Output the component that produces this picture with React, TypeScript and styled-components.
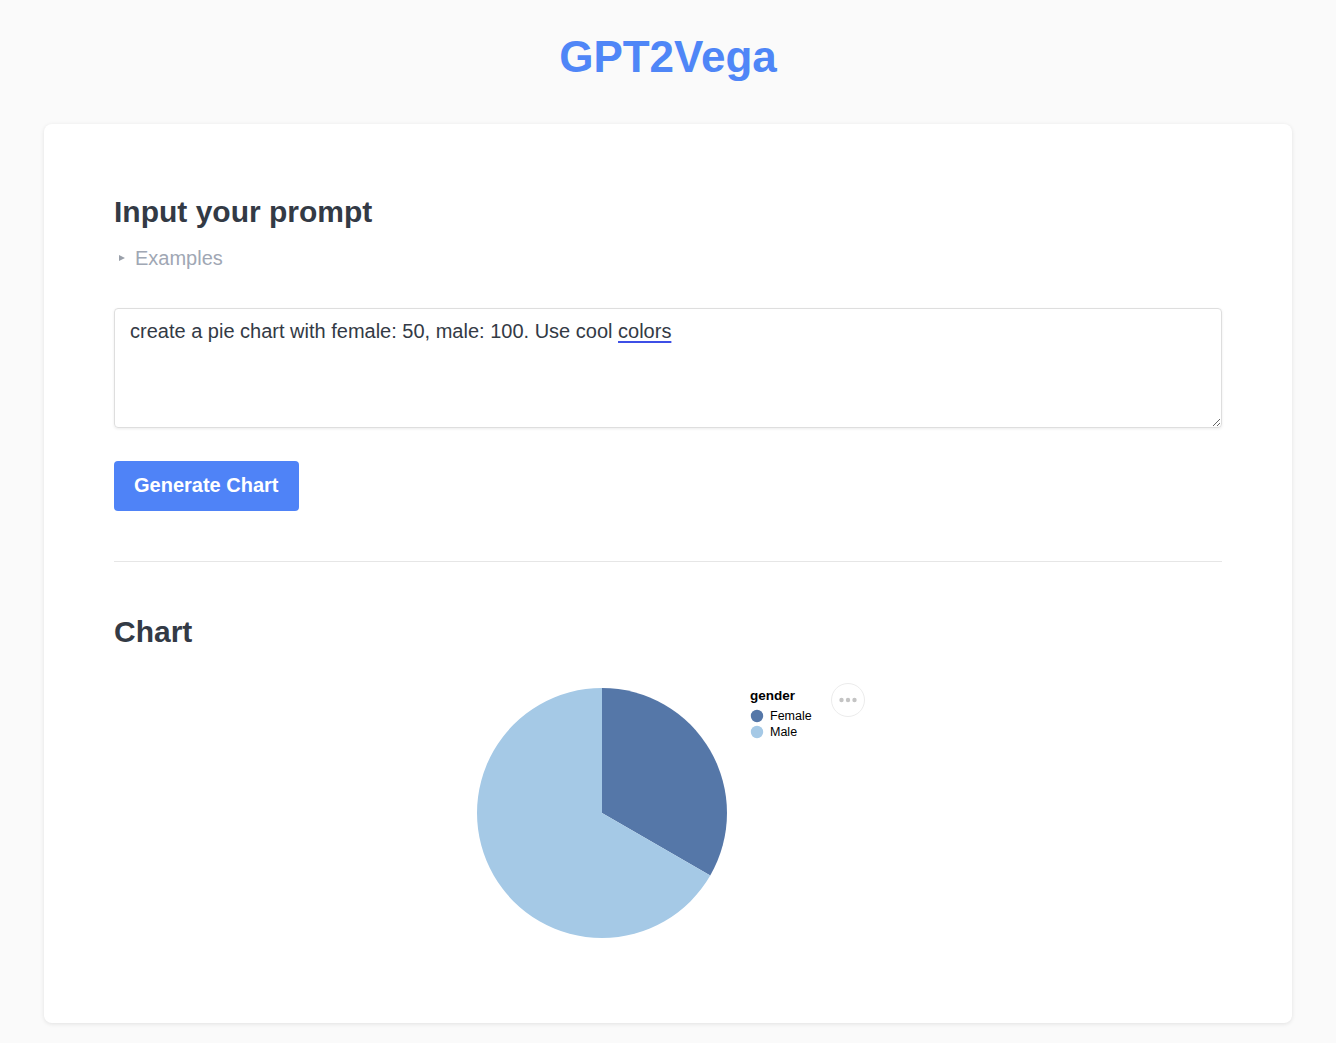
import React from "react";
import styled, { createGlobalStyle } from "styled-components";

const GlobalStyle = createGlobalStyle`
  html, body {
    margin: 0;
    padding: 0;
    background: #fafafa;
    font-family: "Liberation Sans", Arial, sans-serif;
  }
  * { box-sizing: border-box; }
`;

const Page = styled.div`
  padding: 32px 44px 20px;
`;

const Title = styled.h1`
  margin: 0 0 43px;
  text-align: center;
  font-size: 44px;
  font-weight: 700;
  line-height: 49px;
  color: #4f86f7;
`;

const Card = styled.main`
  background: #ffffff;
  border-radius: 8px;
  box-shadow: 0 1px 4px rgba(0, 0, 0, 0.1);
  padding: 71px 70px 80px;
`;

const Heading = styled.h2`
  margin: 0;
  font-size: 30px;
  line-height: 34.5px;
  font-weight: 700;
  color: #333a45;
`;

const Examples = styled.details`
  margin-top: 17px;
  font-size: 20px;
  line-height: 23px;
  color: #a0a7b4;
  summary {
    cursor: pointer;
    list-style: none;
    display: flex;
    align-items: center;
    gap: 10px;
  }
  summary::-webkit-details-marker { display: none; }
`;

const Marker = styled.span`
  display: inline-block;
  width: 0;
  height: 0;
  margin-left: 5px;
  border-top: 3.5px solid transparent;
  border-bottom: 3.5px solid transparent;
  border-left: 6px solid #9aa0aa;
`;

const FieldWrap = styled.div`
  position: relative;
  margin-top: 38px;
`;

const TextArea = styled.textarea`
  display: block;
  width: 100%;
  height: 120px;
  padding: 11px 15px;
  border: 1px solid #dedede;
  border-radius: 4px;
  box-shadow: 0 1px 3px rgba(0, 0, 0, 0.08);
  font-family: "Liberation Sans", Arial, sans-serif;
  font-size: 20px;
  line-height: 23px;
  color: #333a45;
  background: transparent;
  resize: vertical;
  outline: none;
`;

const Backdrop = styled.div`
  position: absolute;
  inset: 0;
  z-index: 1;
  padding: 12px 16px;
  font-size: 20px;
  line-height: 23px;
  color: transparent;
  pointer-events: none;
  white-space: pre-wrap;
`;

const Squiggle = styled.span`
  text-decoration-line: underline;
  text-decoration-style: solid;
  text-decoration-color: #3d4fe6;
  text-decoration-thickness: 1.5px;
  text-underline-offset: 3px;
`;

const Button = styled.button`
  display: block;
  margin-top: 33px;
  height: 50px;
  padding: 0 20px;
  border: none;
  border-radius: 4px;
  background: #4f83f7;
  color: #ffffff;
  font-family: "Liberation Sans", Arial, sans-serif;
  font-size: 20px;
  font-weight: 700;
  cursor: pointer;
`;

const Divider = styled.hr`
  margin: 50px 0 53px;
  border: none;
  border-top: 1px solid #e6e6e6;
`;

const ChartArea = styled.div`
  display: flex;
  justify-content: center;
  margin-top: 34px;
`;

const Embed = styled.div`
  position: relative;
  display: inline-block;
  padding-right: 38px;
`;

const ActionsButton = styled.button`
  position: absolute;
  top: 0;
  right: 0;
  width: 34px;
  height: 34px;
  border-radius: 50%;
  border: 1px solid #ececec;
  background: #ffffff;
  display: flex;
  align-items: center;
  justify-content: center;
  padding: 0;
`;

const PieSvg = styled.svg`
  display: block;
  font-family: "Liberation Sans", Arial, sans-serif;
`;

function PieChart() {
  const cx = 130;
  const cy = 130;
  const r = 125;
  const a = (2 * Math.PI) / 3;
  const ex = cx + r * Math.sin(a);
  const ey = cy - r * Math.cos(a);
  return (
    <PieSvg width={355} height={260} viewBox="0 0 355 260">
      <path
        d={`M${cx},${cy} L${cx},${cy - r} A${r},${r} 0 0 1 ${ex},${ey} Z`}
        fill="#5577a8"
      />
      <path
        d={`M${cx},${cy} L${ex},${ey} A${r},${r} 0 1 1 ${cx},${cy - r} Z`}
        fill="#a5c9e6"
      />
      <text x={278} y={17} fontSize={13.5} fontWeight={700} fill="#000">
        gender
      </text>
      <circle cx={285} cy={33} r={6.2} fill="#5577a8" />
      <text x={298} y={37} fontSize={12.5} fill="#000">
        Female
      </text>
      <circle cx={285} cy={49} r={6.2} fill="#a5c9e6" />
      <text x={298} y={53} fontSize={12.5} fill="#000">
        Male
      </text>
    </PieSvg>
  );
}

export default function App() {
  const prompt = "create a pie chart with female: 50, male: 100. Use cool colors";
  return (
    <>
      <GlobalStyle />
      <Page>
        <Title>GPT2Vega</Title>
        <Card>
          <Heading>Input your prompt</Heading>
          <Examples>
            <summary>
              <Marker />
              Examples
            </summary>
          </Examples>
          <FieldWrap>
            <TextArea defaultValue={prompt} spellCheck={false} />
            <Backdrop aria-hidden>
              {"create a pie chart with female: 50, male: 100. Use cool "}
              <Squiggle>colors</Squiggle>
            </Backdrop>
          </FieldWrap>
          <Button>Generate Chart</Button>
          <Divider />
          <Heading>Chart</Heading>
          <ChartArea>
            <Embed>
              <PieChart />
              <ActionsButton aria-label="Actions">
                <svg width="20" height="6" viewBox="0 0 20 6">
                  <circle cx="3.5" cy="3" r="2.2" fill="#c4c4c4" />
                  <circle cx="10" cy="3" r="2.2" fill="#c4c4c4" />
                  <circle cx="16.5" cy="3" r="2.2" fill="#c4c4c4" />
                </svg>
              </ActionsButton>
            </Embed>
          </ChartArea>
        </Card>
      </Page>
    </>
  );
}
